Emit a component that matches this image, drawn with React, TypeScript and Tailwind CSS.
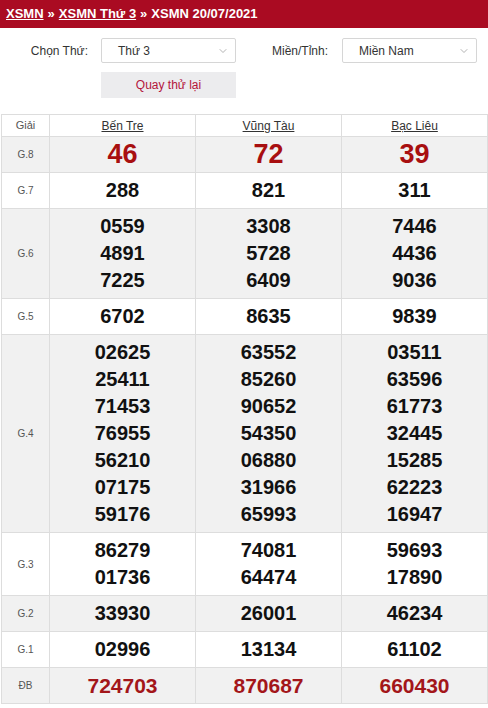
import { ChevronDown } from 'lucide-react';

type Row = {
  label: string;
  values: string[][];
  kind?: 'g8' | 'db';
};

const provinces = ['Bến Tre', 'Vũng Tàu', 'Bạc Liêu'];

const rows: Row[] = [
  { label: 'G.8', values: [['46'], ['72'], ['39']], kind: 'g8' },
  { label: 'G.7', values: [['288'], ['821'], ['311']] },
  {
    label: 'G.6',
    values: [
      ['0559', '4891', '7225'],
      ['3308', '5728', '6409'],
      ['7446', '4436', '9036'],
    ],
  },
  { label: 'G.5', values: [['6702'], ['8635'], ['9839']] },
  {
    label: 'G.4',
    values: [
      ['02625', '25411', '71453', '76955', '56210', '07175', '59176'],
      ['63552', '85260', '90652', '54350', '06880', '31966', '65993'],
      ['03511', '63596', '61773', '32445', '15285', '62223', '16947'],
    ],
  },
  {
    label: 'G.3',
    values: [
      ['86279', '01736'],
      ['74081', '64474'],
      ['59693', '17890'],
    ],
  },
  { label: 'G.2', values: [['33930'], ['26001'], ['46234']] },
  { label: 'G.1', values: [['02996'], ['13134'], ['61102']] },
  { label: 'ĐB', values: [['724703'], ['870687'], ['660430']], kind: 'db' },
];

const SelectBox = ({ value }: { value: string }) => (
  <div className="flex h-[25px] w-[135px] items-center justify-between rounded-[2px] border border-[#d6d6d6] bg-white pl-[16px] pr-[6px] text-[12px] text-[#333]">
    <span>{value}</span>
    <ChevronDown className="h-[12px] w-[12px] text-[#999]" strokeWidth={1.5} />
  </div>
);

const App = () => {
  return (
    <div
      className="h-[708px] w-[488px] overflow-hidden bg-white"
      style={{ fontFamily: '"Liberation Sans", Arial, sans-serif' }}
    >
      {/* Breadcrumb */}
      <div className="flex h-[28px] items-center bg-[#aa0b22] px-[6px] text-[13px] font-bold text-white">
        <span className="underline">XSMN</span>
        <span className="mx-[4px]">»</span>
        <span className="underline">XSMN Thứ 3</span>
        <span className="mx-[4px]">»</span>
        <span>XSMN 20/07/2021</span>
      </div>

      {/* Filters */}
      <div className="grid h-[86px] grid-cols-2 pt-[10px]">
        <div className="flex flex-col gap-[9px]">
          <div className="flex items-center">
            <span className="w-[88px] text-right text-[12px] text-[#333]">Chọn Thứ:</span>
            <div className="ml-[13px]">
              <SelectBox value="Thứ 3" />
            </div>
          </div>
          <div className="ml-[101px] flex h-[26px] w-[135px] items-center justify-center bg-[#ececee] text-[12px] text-[#b3163c]">
            Quay thử lại
          </div>
        </div>
        <div className="flex items-start">
          <div className="flex items-center">
            <span className="w-[84px] text-right text-[12px] text-[#333]">Miền/Tỉnh:</span>
            <div className="ml-[14px]">
              <SelectBox value="Miền Nam" />
            </div>
          </div>
        </div>
      </div>

      {/* Results */}
      <table className="ml-[1px] w-[486px] table-fixed border-collapse">
        <colgroup>
          <col className="w-[48px]" />
          <col className="w-[146px]" />
          <col className="w-[146px]" />
          <col className="w-[146px]" />
        </colgroup>
        <thead>
          <tr className="h-[22px] bg-white">
            <th className="border border-[#dddddd] text-[11px] font-normal text-[#555]">Giải</th>
            {provinces.map((p) => (
              <th key={p} className="border border-[#dddddd] text-[12px] font-normal text-[#333]">
                <span className="underline">{p}</span>
              </th>
            ))}
          </tr>
        </thead>
        <tbody>
          {rows.map((row, i) => (
            <tr key={row.label} className={i % 2 === 0 ? 'bg-[#f1f1f1]' : 'bg-white'}>
              <td className="border border-[#dddddd] text-center text-[10px] text-[#555]">{row.label}</td>
              {row.values.map((col, j) => (
                <td key={j} className="border border-[#dddddd] py-[4px] text-center">
                  {col.map((n) => (
                    <div
                      key={n}
                      className={
                        row.kind === 'g8'
                          ? 'text-[27px] font-bold leading-[27px] text-[#a80f10]'
                          : row.kind === 'db'
                            ? 'text-[21px] font-bold leading-[27px] text-[#a3161a]'
                            : 'text-[20px] font-bold leading-[27px] text-[#111]'
                      }
                    >
                      {n}
                    </div>
                  ))}
                </td>
              ))}
            </tr>
          ))}
        </tbody>
      </table>
    </div>
  );
};

export default App;
